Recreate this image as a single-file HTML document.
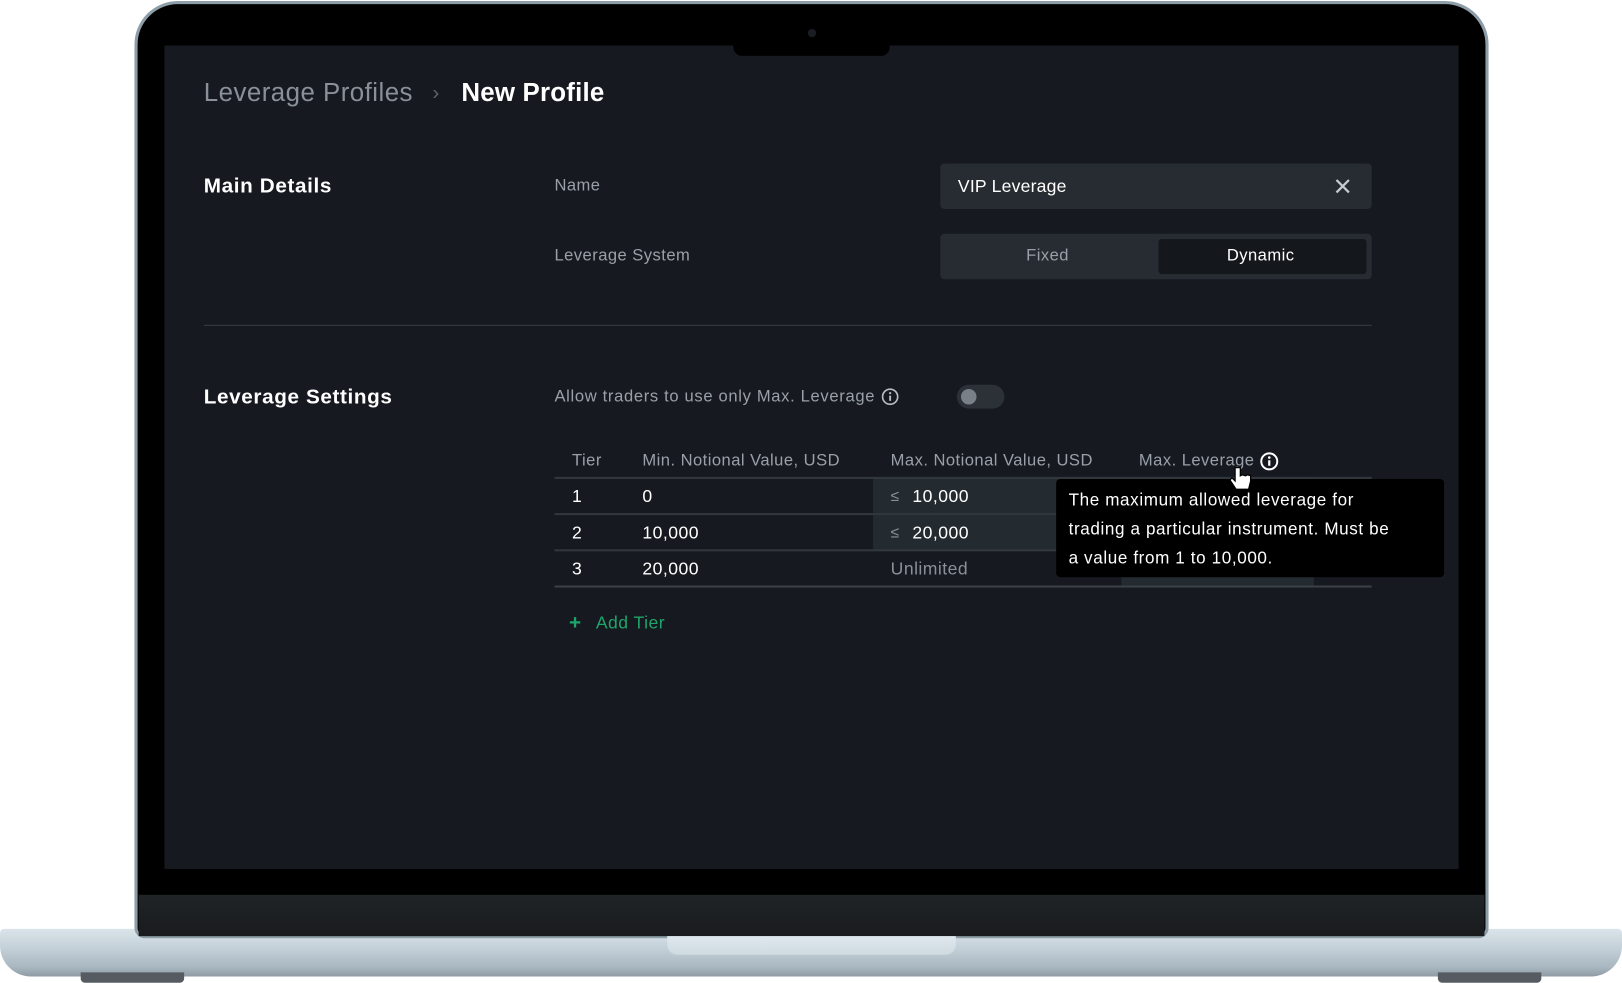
<!DOCTYPE html>
<html><head><meta charset="utf-8"><style>
*{margin:0;padding:0;box-sizing:border-box}
html,body{width:1622px;height:983px;background:#fff;overflow:hidden;font-family:"Liberation Sans",sans-serif}
#w{position:absolute;left:0;top:0;width:1568px;height:950px;transform:scale(1.03444);transform-origin:0 0}
.a{position:absolute}
.t{position:absolute;white-space:nowrap;line-height:1;transform:translateY(-50%);letter-spacing:0.45px}
</style></head><body><div id="w">
<div class="a" style="left:0;top:898px;width:1568px;height:46px;background:linear-gradient(#dbe4ea,#c4d1d9 40%,#a9b7c0 80%,#8e9ba4);border-radius:4px 4px 30px 30px"></div>
<div class="a" style="left:78px;top:940px;width:100px;height:10px;background:#555b60;border-radius:0 0 4px 4px"></div>
<div class="a" style="left:1390px;top:940px;width:100px;height:10px;background:#555b60;border-radius:0 0 4px 4px"></div>
<div class="a" style="left:130px;top:1px;width:1309px;height:906px;background:#000;border:3px solid #8e9ea8;border-radius:42px 42px 10px 10px"></div>
<div class="a" style="left:134px;top:865px;width:1301px;height:40px;background:linear-gradient(#202427,#191b1d)"></div>
<div class="a" style="left:645px;top:905px;width:279px;height:18px;background:linear-gradient(#dfe8ee,#cfdae1);border-radius:0 0 10px 10px"></div>
<div class="a" style="left:159px;top:44px;width:1251px;height:796px;background:#161a20"></div>
<div class="a" style="left:709px;top:44px;width:151px;height:10px;background:#000;border-radius:0 0 8px 8px"></div>
<div class="a" style="left:781px;top:28px;width:8px;height:8px;background:#1a1d22;border-radius:50%"></div>

<div class="t" style="left:197px;top:90px;font-size:25px;color:#8a9098">Leverage Profiles</div>
<div class="t" style="left:418px;top:90px;font-size:20px;color:#5d636a">›</div>
<div class="t" style="left:446px;top:90px;font-size:25px;color:#fff;font-weight:bold;letter-spacing:0.2px">New Profile</div>

<div class="t" style="left:197px;top:180px;font-size:20px;color:#fff;font-weight:bold;letter-spacing:0.6px">Main Details</div>
<div class="t" style="left:536px;top:180px;font-size:16px;color:#9aa0a7">Name</div>
<div class="a" style="left:909px;top:158px;width:417px;height:44px;background:#262c31;border-radius:4px"></div>
<div class="t" style="left:926px;top:180px;font-size:17px;color:#fff;letter-spacing:0.2px">VIP Leverage</div>
<svg class="a" style="left:1290px;top:172px" width="16" height="16" viewBox="0 0 16 16"><path d="M2 2L14 14M14 2L2 14" stroke="#c8ccd0" stroke-width="2.2"/></svg>

<div class="t" style="left:536px;top:248px;font-size:16px;color:#9aa0a7">Leverage System</div>
<div class="a" style="left:909px;top:226px;width:417px;height:44px;background:#262c31;border-radius:4px"></div>
<div class="a" style="left:1120px;top:231px;width:201px;height:34px;background:#14181c;border-radius:3px"></div>
<div class="t" style="left:992px;top:248px;font-size:16px;color:#9aa0a7">Fixed</div>
<div class="t" style="left:1186px;top:248px;font-size:16px;color:#fff">Dynamic</div>

<div class="a" style="left:197px;top:314px;width:1129px;height:1px;background:#363c42"></div>

<div class="t" style="left:197px;top:384px;font-size:20px;color:#fff;font-weight:bold;letter-spacing:0.6px">Leverage Settings</div>
<div class="t" style="left:536px;top:384px;font-size:16px;color:#9aa0a7;letter-spacing:0.65px">Allow traders to use only Max. Leverage</div>
<svg class="a" style="left:852px;top:375px" width="17" height="17" viewBox="0 0 17 17"><circle cx="8.5" cy="8.5" r="7.3" fill="none" stroke="#b8bdc2" stroke-width="1.6"/><path d="M8.5 7.5v5" stroke="#b8bdc2" stroke-width="1.8"/><circle cx="8.5" cy="5" r="1.1" fill="#b8bdc2"/></svg>
<div class="a" style="left:925px;top:372px;width:46px;height:23px;background:#2b3137;border-radius:12px"></div>
<div class="a" style="left:929px;top:376px;width:15px;height:15px;background:#7a8087;border-radius:50%"></div>

<div class="t" style="left:553px;top:446px;font-size:16px;color:#9aa0a7">Tier</div>
<div class="t" style="left:621px;top:446px;font-size:16px;color:#9aa0a7">Min. Notional Value, USD</div>
<div class="t" style="left:861px;top:446px;font-size:16px;color:#9aa0a7">Max. Notional Value, USD</div>
<div class="t" style="left:1101px;top:446px;font-size:16px;color:#9aa0a7">Max. Leverage</div>
<svg class="a" style="left:1218px;top:437px" width="18" height="18" viewBox="0 0 17 17"><circle cx="8.5" cy="8.5" r="7.3" fill="none" stroke="#fff" stroke-width="1.8"/><path d="M8.5 7.5v5" stroke="#fff" stroke-width="2"/><circle cx="8.5" cy="5" r="1.2" fill="#fff"/></svg>

<div class="a" style="left:844px;top:462px;width:240px;height:70px;background:#232a30"></div>
<div class="a" style="left:1084px;top:462px;width:186px;height:106px;background:#232a30"></div>
<div class="a" style="left:536px;top:461px;width:790px;height:2px;background:#31373d"></div>
<div class="a" style="left:536px;top:496px;width:790px;height:2px;background:#31373d"></div>
<div class="a" style="left:536px;top:531px;width:790px;height:2px;background:#31373d"></div>
<div class="a" style="left:536px;top:566px;width:790px;height:2px;background:#3a4046"></div>

<div class="t" style="left:553px;top:480px;font-size:17px;color:#fff">1</div>
<div class="t" style="left:621px;top:480px;font-size:17px;color:#fff">0</div>
<div class="t" style="left:861px;top:480px;font-size:15px;color:#8a9098">≤</div>
<div class="t" style="left:882px;top:480px;font-size:17px;color:#fff">10,000</div>
<div class="t" style="left:553px;top:515px;font-size:17px;color:#fff">2</div>
<div class="t" style="left:621px;top:515px;font-size:17px;color:#fff">10,000</div>
<div class="t" style="left:861px;top:515px;font-size:15px;color:#8a9098">≤</div>
<div class="t" style="left:882px;top:515px;font-size:17px;color:#fff">20,000</div>
<div class="t" style="left:553px;top:550px;font-size:17px;color:#fff">3</div>
<div class="t" style="left:621px;top:550px;font-size:17px;color:#fff">20,000</div>
<div class="t" style="left:861px;top:550px;font-size:17px;color:#8a9098">Unlimited</div>

<div class="a" style="left:1021px;top:463px;width:375px;height:95px;background:#000;border-radius:4px"></div>
<div class="t" style="left:1033px;top:484px;font-size:16.5px;color:#fff;letter-spacing:0.6px">The maximum allowed leverage for</div>
<div class="t" style="left:1033px;top:512px;font-size:16.5px;color:#fff;letter-spacing:0.6px">trading a particular instrument. Must be</div>
<div class="t" style="left:1033px;top:540px;font-size:16.5px;color:#fff;letter-spacing:0.6px">a value from 1 to 10,000.</div>
<svg class="a" style="left:1188px;top:450px" width="24" height="26" viewBox="0 0 24 26"><path d="M6 2v13l-3-3-2 2 6 9h12l2-8v-5l-3-1-2 1-3-1-2 1V2z" fill="#fff" stroke="#000" stroke-width="1.2"/></svg>

<div class="t" style="left:550px;top:602px;font-size:20px;color:#1fa56b;font-weight:bold">+</div>
<div class="t" style="left:576px;top:602px;font-size:17px;color:#1fa56b">Add Tier</div>
</div></body></html>
